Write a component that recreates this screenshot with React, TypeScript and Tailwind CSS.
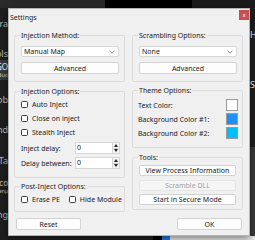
import React from 'react';

const ui = "font-['Noto_Sans','Open_Sans',sans-serif] text-[7px] leading-[9px] text-[#1a1a1a] whitespace-nowrap";

function GroupBox({ title, className, children }: { title: string; className?: string; children: React.ReactNode }) {
  return (
    <fieldset className={`border border-[#dcdcdc] rounded-[2px] ${className ?? ''}`}>
      <legend className="ml-[5px] px-[1px] leading-[9px]">{title}</legend>
      {children}
    </fieldset>
  );
}

function Button({ label, disabled, className }: { label: string; disabled?: boolean; className?: string }) {
  return (
    <div
      className={`flex items-center justify-center rounded-[2px] border ${
        disabled ? 'bg-[#f5f5f5] border-[#e6e6e6] text-[#a3a3a3]' : 'bg-[#fdfdfd] border-[#d3d3d3]'
      } ${className ?? ''}`}
    >
      {label}
    </div>
  );
}

function Select({ value }: { value: string }) {
  return (
    <div className="flex h-[11px] items-center justify-between rounded-[2px] border border-[#d6d6d6] bg-white pl-[2px] pr-[3px]">
      <span>{value}</span>
      <svg width="6" height="4" viewBox="0 0 6 4" fill="none">
        <path d="M0.5 0.8 L3 3.2 L5.5 0.8" stroke="#6b6b6b" strokeWidth="0.8" />
      </svg>
    </div>
  );
}

function Check({ label }: { label: string }) {
  return (
    <div className="flex items-center gap-[4px]">
      <div className="h-[7px] w-[7px] rounded-[1.5px] border border-[#3c3c3c] bg-white" />
      <span>{label}</span>
    </div>
  );
}

function Spin({ label }: { label: string }) {
  return (
    <div className="flex h-[12px] items-center pr-[4px]">
      <span className="flex-1">{label}</span>
      <div className="flex h-full w-[45px] border border-[#d6d6d6] bg-white">
        <span className="flex-1 pl-[1px] leading-[10px]">0</span>
        <div className="flex w-[7px] flex-col border-l border-[#d6d6d6] bg-[#f4f4f4]">
          <div className="flex flex-1 items-center justify-center border-b border-[#d6d6d6]">
            <svg width="4" height="3" viewBox="0 0 4 3"><path d="M0 3 L2 0 L4 3 Z" fill="#222" /></svg>
          </div>
          <div className="flex flex-1 items-center justify-center">
            <svg width="4" height="3" viewBox="0 0 4 3"><path d="M0 0 L2 3 L4 0 Z" fill="#222" /></svg>
          </div>
        </div>
      </div>
    </div>
  );
}

function ColorRow({ label, color }: { label: string; color: string }) {
  return (
    <div className="flex h-[12px] items-center justify-between">
      <span>{label}</span>
      <div className={`h-[12px] w-[12px] border border-[#9a9a9a] ${color}`} />
    </div>
  );
}

// dark app peeking out behind the dialog
function Backdrop() {
  const edge = 'flex justify-end overflow-hidden';
  return (
    <div className="absolute inset-0 flex flex-col">
      <div className="flex h-[8px]">
        <div className="w-[105px] bg-[#2a2a2a]" />
        <div className="w-[87px] bg-black" />
        <div className="flex-1 bg-[#1c1c1c]" />
      </div>
      <div className="flex flex-1">
        <div className="flex w-[8px] flex-col text-[9px] leading-[12px] text-[#bdbdbd]">
          <div className="h-[10px]" />
          <div className={`${edge} h-[12px]`}>Extra</div>
          <div className="h-[18px]" />
          <div className={`${edge} h-[12px]`}>Tools</div>
          <div className="flex h-[20px] flex-col justify-center gap-[1px] bg-[#3a3a3a]">
            <div className={`${edge} h-[9px] text-[8px] leading-[9px] text-white`}>GO</div>
            <div className={`${edge} h-[7px] text-[6px] leading-[7px] text-[#cfcfcf]`}>Produc</div>
          </div>
          <div className="h-[14px]" />
          <div className={`${edge} h-[12px]`}>Lob</div>
          <div className="h-[18px]" />
          <div className={`${edge} h-[12px]`}>Find</div>
          <div className="h-[19px]" />
          <div className={`${edge} h-[12px]`}>Ta</div>
          <div className="h-[11px]" />
          <div className={`${edge} h-[10px] text-[8px] leading-[10px]`}>Disco</div>
          <div className={`${edge} h-[7px] text-[5px] leading-[7px]`}>Menµ</div>
          <div className="h-[14px]" />
          <div className={`${edge} h-[12px]`}>Setting</div>
        </div>
        <div className="flex-1" />
        <div className="flex w-[5px] flex-col text-[9px] leading-[12px] text-white">
          <div className="h-[21px]" />
          <div className="h-[12px] overflow-hidden">H</div>
          <div className="h-[38px]" />
          <div className="h-[12px] overflow-hidden">S</div>
          <div className="h-[56px]" />
          <div className="flex-1 bg-[#3b3b3b]" />
        </div>
      </div>
      <div className="flex h-[4px]">
        <div className="w-[153px]" />
        <div className="w-[9px] bg-black" />
        <div className="w-[8px] bg-[#1e7be0]" />
        <div className="flex-1 bg-[#e8e8e8]" />
      </div>
    </div>
  );
}

export default function App() {
  return (
    <div className={`relative h-[240px] w-[255px] overflow-hidden bg-[#1f1f1f] ${ui}`}>
      <Backdrop />
      <div className="absolute left-[8px] top-[8px] flex h-[228px] w-[242px] flex-col border border-[#b5b5b5] bg-[#f0f0f0] shadow-[0_2px_8px_rgba(0,0,0,0.5)]">
        <div className="flex h-[15px] items-start justify-between">
          <span className="pl-[1px] pt-[4px]">Settings</span>
          <div className="mt-[1px] flex h-[10px] w-[10px] items-center justify-center bg-[#c94f4f] text-[6px] leading-[6px] text-white">
            x
          </div>
        </div>

        <div className="flex gap-[7px] pl-[5px] pr-[6px] pt-[7px]">
          {/* left column */}
          <div className="flex flex-1 flex-col">
            <GroupBox title="Injection Method:">
              <div className="flex flex-col gap-[5px] pb-[7px] pl-[6px] pr-[5px] pt-[6px]">
                <Select value="Manual Map" />
                <Button label="Advanced" className="h-[12px]" />
              </div>
            </GroupBox>
            <GroupBox title="Injection Options:" className="mt-[5px]">
              <div className="flex flex-col pb-[8px] pl-[6px] pt-[1px]">
                <div className="flex h-[14px] items-center"><Check label="Auto Inject" /></div>
                <div className="flex h-[14px] items-center"><Check label="Close on inject" /></div>
                <div className="flex h-[14px] items-center"><Check label="Stealth Inject" /></div>
                <div className="mt-[3px] flex flex-col gap-[3px]">
                  <Spin label="Inject delay:" />
                  <Spin label="Delay between:" />
                </div>
              </div>
            </GroupBox>
            <GroupBox title="Post-Inject Options:" className="mt-[4px]">
              <div className="mb-[5px] mt-[1px] flex h-[14px] items-center gap-[9px] pl-[6px]">
                <Check label="Erase PE" />
                <Check label="Hide Module" />
              </div>
            </GroupBox>
          </div>

          {/* right column */}
          <div className="flex flex-1 flex-col">
            <GroupBox title="Scrambling Options:">
              <div className="flex flex-col gap-[5px] pb-[7px] pl-[6px] pr-[5px] pt-[6px]">
                <Select value="None" />
                <Button label="Advanced" className="h-[12px]" />
              </div>
            </GroupBox>
            <GroupBox title="Theme Options:" className="mt-[4px]">
              <div className="flex flex-col gap-[2px] pb-[8px] pl-[5px] pr-[4px] pt-[4px]">
                <ColorRow label="Text Color:" color="bg-white" />
                <ColorRow label="Background Color #1:" color="bg-[#1e8fff]" />
                <ColorRow label="Background Color #2:" color="bg-[#00bfff]" />
              </div>
            </GroupBox>
            <GroupBox title="Tools:" className="mt-[5px]">
              <div className="flex flex-col gap-[3.5px] pb-[4px] pl-[6px] pr-[6px] pt-[3px]">
                <Button label="View Process Information" className="h-[11px]" />
                <Button label="Scramble DLL" disabled className="h-[11px]" />
                <Button label="Start in Secure Mode" className="h-[11px]" />
              </div>
            </GroupBox>
          </div>
        </div>

        <div className="mt-auto flex justify-between px-[7px] pb-[5px]">
          <Button label="Reset" className="h-[12px] w-[65px]" />
          <Button label="OK" className="h-[12px] w-[65px]" />
        </div>
      </div>
    </div>
  );
}
